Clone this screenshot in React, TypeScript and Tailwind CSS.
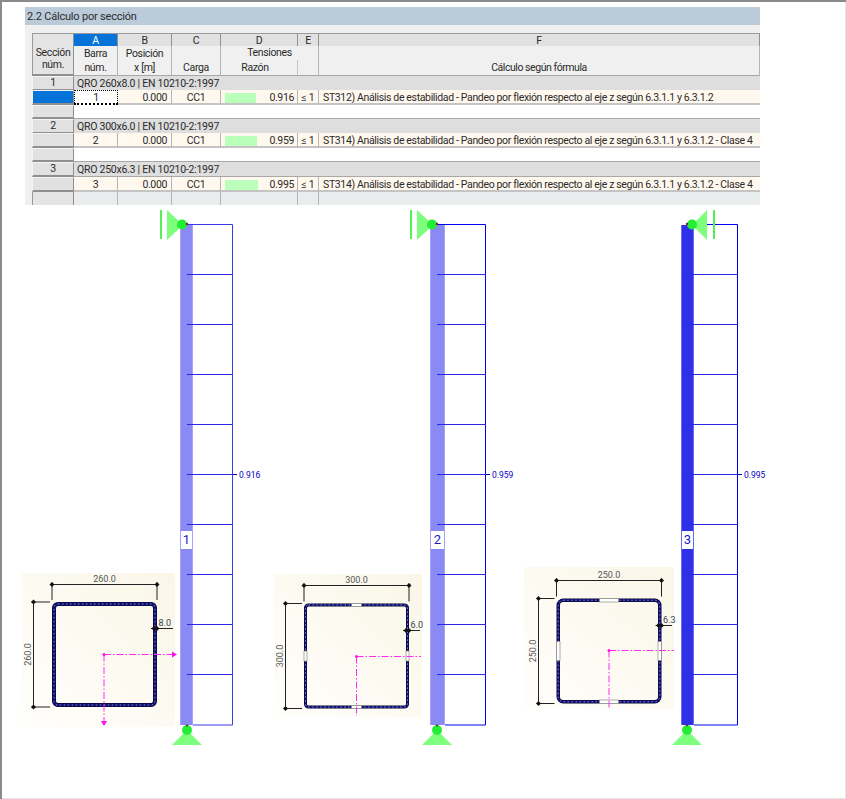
import React from "react";

const rowsData = [
  { n: "1", title: "QRO 260x8.0 | EN 10210-2:1997", bar: "1", ratio: "0.916", w: 31, text: "ST312) Análisis de estabilidad - Pandeo por flexión respecto al eje z según 6.3.1.1 y 6.3.1.2", h: ["h-[14px]", "h-[15px]", "h-[14px]"] },
  { n: "2", title: "QRO 300x6.0 | EN 10210-2:1997", bar: "2", ratio: "0.959", w: 32, text: "ST314) Análisis de estabilidad - Pandeo por flexión respecto al eje z según 6.3.1.1 y 6.3.1.2 - Clase 4", h: ["h-[14px]", "h-[15px]", "h-[14px]"] },
  { n: "3", title: "QRO 250x6.3 | EN 10210-2:1997", bar: "3", ratio: "0.995", w: 33, text: "ST314) Análisis de estabilidad - Pandeo por flexión respecto al eje z según 6.3.1.1 y 6.3.1.2 - Clase 4", h: ["h-[15px]", "h-[15px]", ""] },
];

const cols = "grid grid-cols-[42px_44px_54px_49px_77px_21px_441px]";
const rowHead = "bg-[#e1e1e1] border border-[#f4f4f4] border-r-[#8f8f8f] border-b-[#8f8f8f] border-b-2 flex items-center justify-center leading-none pt-[1px]";
const colHead = "bg-[#e1e1e1] border-r border-r-[#8f8f8f] border-b-2 border-b-[#8a8a8a] border-t border-t-[#9a9a9a] flex items-center justify-center leading-none pt-[2px]";
const dataCell = "bg-[#fff8ee] border-r border-[#b5b5b5] border-b-2 border-b-[#c4c4c4] flex items-center leading-none overflow-hidden whitespace-nowrap pt-[3px]";
const headCell = "bg-[#f0f0f0] border-r border-[#b5b5b5] border-b border-b-[#a8a8a8] flex flex-col items-center leading-none";

function Table() {
  return (
    <div className="w-[728px] ml-[7px] tracking-[-0.35px]">
      <div className={`${cols} h-[13px]`}>
        <div className={`${colHead} bg-[#e4e4e4] border-l border-l-[#9a9a9a] border-b-0`} />
        <div className={`${colHead} !bg-[#0673d8] text-white`}>A</div>
        <div className={colHead}>B</div>
        <div className={colHead}>C</div>
        <div className={colHead}>D</div>
        <div className={colHead}>E</div>
        <div className={colHead}>F</div>
      </div>
      <div className={`${cols} h-[30px]`}>
        <div className="bg-[#e4e4e4] border-l border-l-[#9a9a9a] border-r border-r-[#8f8f8f] border-b-2 border-b-[#8f8f8f] flex flex-col items-center pt-[2px] gap-[2px] leading-[10px]">
          <span>Sección</span>
          <span>núm.</span>
        </div>
        <div className={`${headCell} justify-between pt-[3px] pb-[2px]`}><span>Barra</span><span>núm.</span></div>
        <div className={`${headCell} justify-between pt-[3px] pb-[2px]`}><span>Posición</span><span>x [m]</span></div>
        <div className={`${headCell} justify-end pb-[2px]`}><span>Carga</span></div>
        <div className="col-span-2 bg-[#f0f0f0] border-r border-[#b5b5b5] border-b border-b-[#a8a8a8] flex flex-col">
          <div className="h-[14px] flex items-center justify-center leading-none">Tensiones</div>
          <div className="flex-1 grid grid-cols-[77px_20px]">
            <div className="border-r border-[#c4c4c4] flex items-end justify-center pb-[2px] pr-[8px] leading-none">Razón</div>
            <div />
          </div>
        </div>
        <div className={`${headCell} justify-end pb-[2px] tracking-[-0.45px]`}><span>Cálculo según fórmula</span></div>
      </div>
      {rowsData.map((r, i) => (
        <React.Fragment key={r.n}>
          <div className={`${cols} ${r.h[0]}`}>
            <div className={rowHead}>{r.n}</div>
            <div className="col-span-6 bg-[#dedede] border-b border-b-[#a8a8a8] flex items-center pl-[3px] pt-[2px] leading-none tracking-[-0.25px]">{r.title}</div>
          </div>
          <div className={`${cols} ${r.h[1]}`}>
            <div className={`${rowHead} ${i === 0 ? "!bg-[#0673d8]" : ""}`} />
            <div className={`${dataCell} justify-center ${i === 0 ? "border border-dotted !border-black bg-white" : ""}`}>{r.bar}</div>
            <div className={`${dataCell} justify-end pr-[4px]`}>0.000</div>
            <div className={`${dataCell} justify-center`}>CC1</div>
            <div className={`${dataCell} justify-between pl-[4px] pr-[3px]`}>
              <div className="h-[10px] -mt-[1px] bg-[#baffba]" style={{ width: r.w }} />
              <span>{r.ratio}</span>
            </div>
            <div className={`${dataCell} justify-center`}>≤ 1</div>
            <div className={`${dataCell} pl-[4px] border-r-0`}>{r.text}</div>
          </div>
          {i < 2 ? (
            <div className={`${cols} ${r.h[2]}`}>
              <div className={rowHead} />
              <div className="col-span-6 bg-white border-b border-b-[#a8a8a8]" />
            </div>
          ) : (
            <div className={`${cols} h-[13px]`}>
              <div className="bg-[#e4e4e4] border-l border-l-[#9a9a9a] border-r border-r-[#8f8f8f]" />
              {[0, 1, 2, 3, 4, 5].map((c) => (
                <div key={c} className="bg-[#e9eded] border-r border-[#b5b5b5] last:border-r-0" />
              ))}
            </div>
          )}
        </React.Fragment>
      ))}
    </div>
  );
}

const NAVY = "#10106e";

function Tip({ x, y }: { x: number; y: number }) {
  return <path d={`M${x - 2.5} ${y}L${x} ${y - 2.5}L${x + 2.5} ${y}L${x} ${y + 2.5}Z`} fill="#111" />;
}

type Sec = {
  px: number; py: number; pw: number; ph: number;
  x: number; y: number; s: number; t: number; r: number;
  dimTop: number; dimLeft: number; label: string; tlabel: string;
  thY: number; cx: number; cy: number; axisR: number; axisB: number; arrows: boolean; gap: number;
};

function Section({ p, id }: { p: Sec; id: string }) {
  const ins = p.t / 2;
  const x2 = p.x + p.s;
  const y2 = p.y + p.s;
  const mx = p.x + p.s / 2;
  const my = p.y + p.s / 2;
  return (
    <g>
      <defs>
        <linearGradient id={id} x1="0" y1="1" x2="1" y2="0">
          <stop offset="0" stopColor="#fffefb" />
          <stop offset="1" stopColor="#faf6e8" />
        </linearGradient>
      </defs>
      <rect x={p.px} y={p.py} width={p.pw} height={p.ph} fill={`url(#${id})`} />
      <rect x={p.x + ins} y={p.y + ins} width={p.s - p.t} height={p.s - p.t} rx={p.r} fill="none" stroke="#07072e" strokeWidth={p.t} />
      <rect x={p.x + ins} y={p.y + ins} width={p.s - p.t} height={p.s - p.t} rx={p.r} fill="none" stroke={NAVY} strokeWidth={p.t - 1} />
      <rect x={p.x + ins} y={p.y + ins} width={p.s - p.t} height={p.s - p.t} rx={p.r} fill="none" stroke="#8f93d8" strokeWidth={0.9} strokeDasharray="1.5 2.5" />
      {p.gap > 0 && (
        <g fill="#ffffff" stroke="#8a8a8a" strokeWidth="0.7">
          <rect x={mx - p.gap / 2} y={p.y} width={p.gap} height={p.t} />
          <rect x={mx - p.gap / 2} y={y2 - p.t} width={p.gap} height={p.t} />
          <rect x={p.x} y={my - p.gap / 2} width={p.t} height={p.gap} />
          <rect x={x2 - p.t} y={my - p.gap / 2} width={p.t} height={p.gap} />
        </g>
      )}
      <g stroke="#222" strokeWidth="1" fill="none">
        <path d={`M${p.x} ${p.dimTop}H${x2}M${p.x} ${p.dimTop - 2}V${p.y - 2}M${x2} ${p.dimTop - 2}V${p.y - 2}`} />
        <path d={`M${p.dimLeft} ${p.y}V${y2}M${p.dimLeft - 2} ${p.y}H${p.x - 2}M${p.dimLeft - 2} ${y2}H${p.x - 2}`} />
        <path d={`M${x2 - 6} ${p.thY}H${p.px + p.pw - 2}`} />
      </g>
      <Tip x={p.x} y={p.dimTop} />
      <Tip x={x2} y={p.dimTop} />
      <Tip x={p.dimLeft} y={p.y} />
      <Tip x={p.dimLeft} y={y2} />
      <Tip x={x2 - 3} y={p.thY} />
      <Tip x={x2} y={p.thY} />
      <g fontFamily="Roboto, sans-serif" fontSize="9" fill="#555">
        <text x={mx} y={p.dimTop - 2.5} textAnchor="middle">{p.label}</text>
        <text x={p.dimLeft - 3} y={my} textAnchor="middle" transform={`rotate(-90 ${p.dimLeft - 3} ${my})`}>{p.label}</text>
        <text x={x2 + 1.5} y={p.thY - 2.5} fill="#345">{p.tlabel}</text>
      </g>
      <g stroke="#ff2cf0" strokeWidth="1" fill="none" strokeDasharray="7 2 1.5 2">
        <path d={`M${p.cx} ${p.cy}H${p.axisR}`} />
        <path d={`M${p.cx} ${p.cy}V${p.axisB}`} />
      </g>
      <circle cx={p.cx} cy={p.cy} r="1.5" fill="#ff10e8" />
      {p.arrows && (
        <g fill="#ff10e8">
          <path d={`M${p.axisR - 3} ${p.cy - 3}L${p.axisR + 2} ${p.cy}L${p.axisR - 3} ${p.cy + 3}Z`} />
          <path d={`M${p.cx - 3} ${p.axisB - 3}L${p.cx} ${p.axisB + 2}L${p.cx + 3} ${p.axisB - 3}Z`} />
        </g>
      )}
    </g>
  );
}

type Mem = { bx: number; bw: number; right: number; color: string; edge: string; label: string; value: string; c: number; line: string };

function Member({ m }: { m: Mem }) {
  const ticks = [275, 325, 375, 425, 475, 525, 575, 625, 675];
  return (
    <g>
      <rect x={m.bx} y="225" width={m.bw} height="500" fill={m.color} />
      <rect x={m.bx + m.bw - 1} y="225" width="1" height="500" fill={m.edge} />
      <rect x={m.bx} y="225" width="1" height="500" fill={m.edge} />
      <path d={`M${m.c} 224.5H${m.right - 0.5}V725H${m.bx + m.bw}`} stroke={m.line} strokeWidth="1" fill="none" />
      {ticks.map((t) => (
        <path key={t} d={`M${m.c} ${t - 0.5}H${m.right}`} stroke="#2a2ae6" strokeWidth="1" fill="none" />
      ))}
      <path d={`M${m.right} 474.5h4`} stroke="#0000c0" strokeWidth="1" />
      <text x={m.right + 6} y="478" fontFamily="Roboto, sans-serif" fontSize="8.5" fill="#0000c8">{m.value}</text>
      <rect x={m.bx + 1} y="531" width={m.bw - 2} height="18" fill="#fff" />
      <text x={m.bx + m.bw / 2} y="544" textAnchor="middle" fontFamily="Roboto, sans-serif" fontSize="13" fill="#1a1ad0">{m.label}</text>
      <path d={`M${m.c} 730L${m.c + 15} 745H${m.c - 15}Z`} fill="#7dff7d" />
      <circle cx={m.c} cy="730" r="5" fill="#22ee33" />
      <circle cx={m.c} cy="725.5" r="1" fill="#7a2030" />
    </g>
  );
}

function Drawing() {
  return (
    <svg className="block" width="844" height="592" viewBox="2 205 844 592" xmlns="http://www.w3.org/2000/svg">
      <Member m={{ bx: 180, bw: 13, right: 233, color: "#8a8af5", edge: "#a4a4f8", label: "1", value: "0.916", c: 187, line: "#3b3bea" }} />
      <Member m={{ bx: 430, bw: 15, right: 486, color: "#8a8af5", edge: "#a4a4f8", label: "2", value: "0.959", c: 437, line: "#0000ee" }} />
      <Member m={{ bx: 681, bw: 13, right: 738, color: "#3030e8", edge: "#6a6aee", label: "3", value: "0.995", c: 687, line: "#0000ee" }} />

      <g fill="#7dff7d">
        <path d="M167 210L183 225L167 240Z" />
        <rect x="160" y="210" width="2" height="29" fill="#55f055" />
        <circle cx="182" cy="224.5" r="5" fill="#22ee33" />
        <circle cx="187" cy="224" r="1.2" fill="#7a2030" />
        <path d="M417 210L433 225L417 240Z" />
        <rect x="410" y="210" width="2" height="29" fill="#55f055" />
        <circle cx="432" cy="224.5" r="5" fill="#22ee33" />
        <circle cx="437" cy="224" r="1.2" fill="#7a2030" />
        <path d="M707 210L692 225L707 240Z" />
        <rect x="713" y="210" width="2" height="29" fill="#55f055" />
        <circle cx="692" cy="224.5" r="5" fill="#22ee33" />
        <circle cx="687" cy="224" r="1.2" fill="#7a2030" />
      </g>

      <Section id="s1" p={{ px: 22, py: 573, pw: 153, ph: 154, x: 52, y: 602, s: 105, t: 4, r: 4, dimTop: 584.5, dimLeft: 33.5, label: "260.0", tlabel: "8.0", thY: 628.5, cx: 104, cy: 654.5, axisR: 175, axisB: 724, arrows: true, gap: 0 }} />
      <Section id="s2" p={{ px: 274, py: 574, pw: 148, ph: 143, x: 304, y: 603.5, s: 105, t: 3, r: 3, dimTop: 585.5, dimLeft: 285.5, label: "300.0", tlabel: "6.0", thY: 630.5, cx: 356.5, cy: 656.5, axisR: 421, axisB: 716, arrows: false, gap: 10 }} />
      <Section id="s3" p={{ px: 524, py: 567, pw: 150, ph: 142, x: 556.5, y: 598.5, s: 105, t: 3.5, r: 5, dimTop: 580.5, dimLeft: 538.5, label: "250.0", tlabel: "6.3", thY: 625.5, cx: 609, cy: 650.5, axisR: 674, axisB: 708, arrows: false, gap: 19 }} />
    </svg>
  );
}

export default function App() {
  return (
    <div className="w-[846px] h-[799px] bg-white border-l-2 border-t-2 border-l-[#8a8a8a] border-t-[#8a8a8a] overflow-hidden font-['Roboto','Liberation_Sans',sans-serif] text-[10.5px] text-[#2b2b2b]">
      <div className="h-[797px] w-[844px] border-r border-b border-[#e4e4e4] pt-[5px] pl-[23px]">
        <div className="w-[735px] h-[198px] bg-[#f0f0f0]">
          <div className="h-[18px] bg-[#bccbd9] flex items-center pl-[2px] pt-[2px] text-[11px] font-normal tracking-[-0.2px]">2.2 Cálculo por sección</div>
          <div className="pt-[8px]">
            <Table />
          </div>
        </div>
        <div className="-ml-[23px]">
          <Drawing />
        </div>
      </div>
    </div>
  );
}
